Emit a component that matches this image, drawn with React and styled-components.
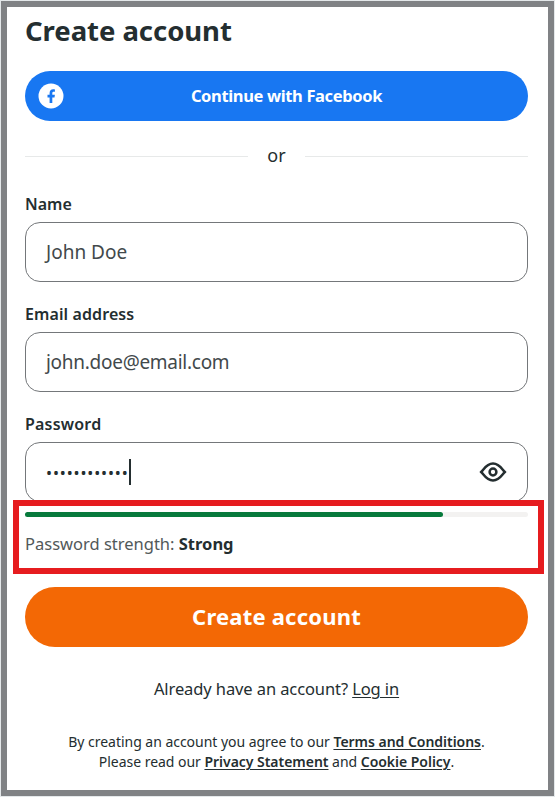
import React from "react";
import styled, { createGlobalStyle } from "styled-components";

const GlobalStyle = createGlobalStyle`
  * { box-sizing: border-box; }
  body { margin: 0; background: #e4e8ea; }
  button, input { font: inherit; }
`;

const Page = styled.main`
  width: 555px;
  height: 797px;
  padding: 1px;
  font-family: "Noto Sans", "Open Sans", sans-serif;
  color: #242e30;
`;

const Frame = styled.section`
  height: 795px;
  width: 553px;
  border: 6px solid #808285;
  background: #fff;
  padding: 0 20px 0 18px;
  display: flex;
  flex-direction: column;
`;

const Text = styled.span`
  font-size: ${(p) => p.$size}px;
  font-weight: ${(p) => p.$weight || 400};
  letter-spacing: ${(p) => p.$track || 0}px;
  white-space: nowrap;
`;

const Title = styled.h1`
  margin: 4px 0 20px;
  height: 40px;
  line-height: 40px;
  font-size: 27.5px;
  font-weight: 700;
  letter-spacing: -0.05px;
  white-space: nowrap;
`;

const FacebookButton = styled.button`
  height: 50px;
  flex: none;
  border: 0;
  border-radius: 25px;
  background: #1877f2;
  color: #fff;
  padding: 0 14px 0 13px;
  display: grid;
  grid-template-columns: 26px 1fr;
  align-items: center;
`;

const ButtonLabel = styled(Text)`
  text-align: center;
  padding: 0 5px 2px 0;
`;

const Divider = styled.div`
  height: 70px;
  flex: none;
  display: flex;
  align-items: center;
  justify-content: space-between;
`;

const DividerText = styled(Text)`
  padding-bottom: 2px;
`;

const Rule = styled.span`
  width: 223px;
  height: 1px;
  background: #e7e9e9;
`;

const Field = styled.label`
  height: ${(p) => p.$height || 110}px;
  flex: none;
  display: flex;
  flex-direction: column;
`;

const FieldLabel = styled(Text)`
  height: 31px;
  line-height: 26px;
`;

const InputBox = styled.span`
  height: 60px;
  flex: none;
  border: 1px solid #74777a;
  border-radius: 15px;
  padding: 0 20px;
  display: flex;
  align-items: center;
  color: #42494b;
`;

const Dots = styled(Text)`
  color: #242e30;
  padding-top: 2px;
`;

const Caret = styled.span`
  width: 2px;
  height: 26px;
  background: #242e30;
  margin-right: auto;
`;

const Strength = styled.section`
  position: relative;
  height: 85px;
  flex: none;
  padding-top: 10px;
`;

const Highlight = styled.div`
  position: absolute;
  top: -2px;
  left: -12px;
  right: -16px;
  height: 74px;
  border: 6px solid #e61c1f;
`;

const Track = styled.div`
  height: 5px;
  border-radius: 3px;
  background: #f3f2f1;
`;

const Fill = styled.div`
  width: 418px;
  height: 5px;
  border-radius: 3px;
  background: #077a3c;
`;

const StrengthText = styled.div`
  height: 24px;
  line-height: 24px;
  margin-top: 15px;
  color: #515859;
  b { color: #242e30; }
`;

const SubmitButton = styled.button`
  height: 60px;
  flex: none;
  border: 0;
  border-radius: 30px;
  background: #f36805;
  color: #fff;
  padding: 0 0 2px;
`;

const Login = styled.p`
  margin: 29px 0 0;
  height: 26px;
  line-height: 26px;
  text-align: center;
`;

const Legal = styled.p`
  margin: 30px 0 0;
  display: flex;
  flex-direction: column;
  align-items: center;
`;

const LegalLine = styled(Text)`
  height: 20px;
  line-height: 20px;
`;

const Link = styled.a`
  font-weight: ${(p) => (p.$strong ? 600 : 400)};
  text-decoration: underline;
  text-decoration-thickness: 1px;
  text-underline-offset: 2px;
`;

const FacebookIcon = () => (
  <svg width="26" height="26" viewBox="0 0 26 26">
    <circle cx="13" cy="13" r="12.5" fill="#fff" />
    <path
      d="M11.6 20v-5.600H9.500v-2.700h2.100v-1.500c0-2.700 1.300-4 3.600-4 .8 0 1.400.1 1.700.2v2.300h-1.200c-1 0-1.400.6-1.400 1.400v1.600h2.600l-.4 2.700h-2.200V20z"
      fill="#1877f2"
    />
  </svg>
);

const EyeIcon = () => (
  <svg width="28" height="24" viewBox="0 0 28 24" fill="none" stroke="#242e30" strokeWidth="2.500">
    <path d="M2.200 12C5 9.200 7.400 3.500 14 3.500S23 9.200 25.800 12C23 14.800 20.600 20.500 14 20.500S5 14.800 2.200 12Z" strokeLinejoin="miter" />
    <circle cx="14" cy="12" r="3.400" />
  </svg>
);

export default function App() {
  return (
    <Page>
      <GlobalStyle />
      <Frame>
        <Title>Create account</Title>
        <FacebookButton>
          <FacebookIcon />
          <ButtonLabel $size={16.5} $weight={700} $track={-0.36}>Continue with Facebook</ButtonLabel>
        </FacebookButton>
        <Divider>
          <Rule />
          <DividerText $size={18}>or</DividerText>
          <Rule />
        </Divider>
        <Field>
          <FieldLabel $size={16} $weight={600}>Name</FieldLabel>
          <InputBox><Text $size={19}>John Doe</Text></InputBox>
        </Field>
        <Field>
          <FieldLabel $size={16} $weight={600} $track={0.1}>Email address</FieldLabel>
          <InputBox><Text $size={19} $track={-0.28}>john.doe@email.com</Text></InputBox>
        </Field>
        <Field $height={91}>
          <FieldLabel $size={16} $weight={600} $track={0.2}>Password</FieldLabel>
          <InputBox>
            <Dots $size={16} $track={0.87}>••••••••••••</Dots>
            <Caret />
            <EyeIcon />
          </InputBox>
        </Field>
        <Strength>
          <Track><Fill /></Track>
          <StrengthText>
            <Text $size={16.5}>Password strength: <b>Strong</b></Text>
          </StrengthText>
          <Highlight />
        </Strength>
        <SubmitButton>
          <Text $size={22} $weight={700} $track={0.2}>Create account</Text>
        </SubmitButton>
        <Login>
          <Text $size={16.5} $track={-0.1}>Already have an account? <Link>Log in</Link></Text>
        </Login>
        <Legal>
          <LegalLine $size={14} $track={-0.03}>
            By creating an account you agree to our <Link $strong>Terms and Conditions</Link>.
          </LegalLine>
          <LegalLine $size={14} $track={-0.03}>
            Please read our <Link $strong>Privacy Statement</Link> and <Link $strong>Cookie Policy</Link>.
          </LegalLine>
        </Legal>
      </Frame>
    </Page>
  );
}
